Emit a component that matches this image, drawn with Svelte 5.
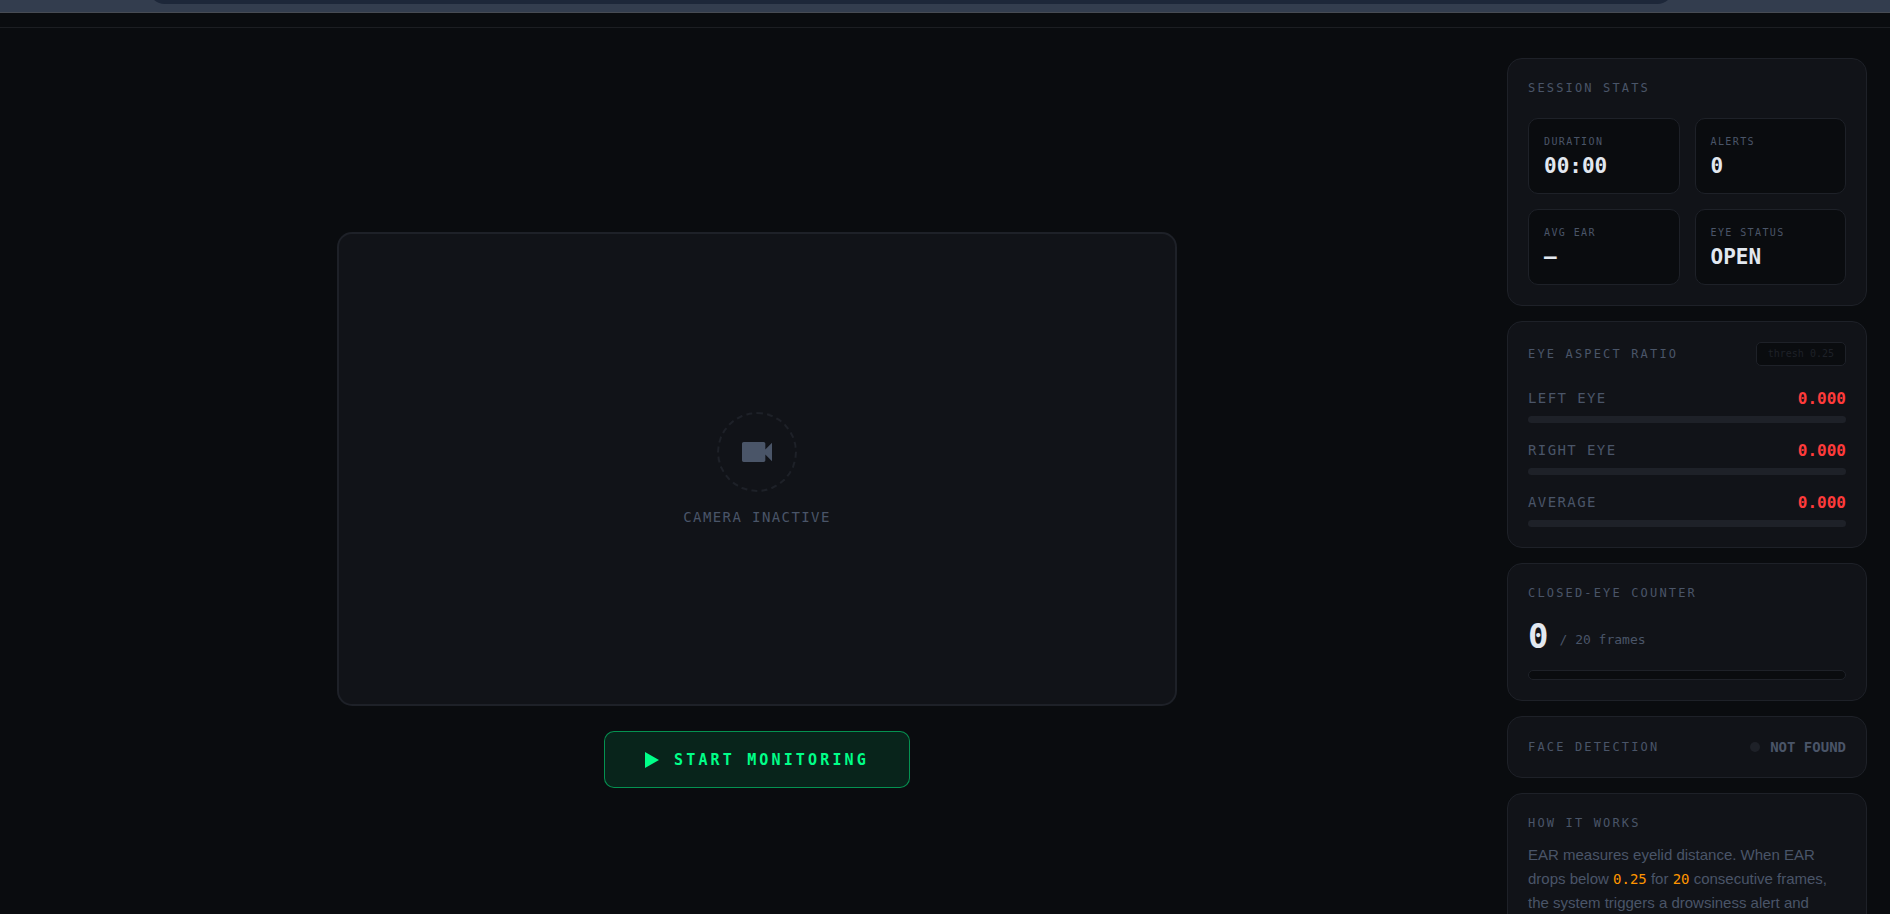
<script>
  const threshold = 0.25;
  const maxFrames = 20;

  let closedFrames = 0;
  let faceStatus = "NOT FOUND";

  let stats = [
    { label: "DURATION", value: "00:00" },
    { label: "ALERTS", value: "0" },
    { label: "AVG EAR", value: "—" },
    { label: "EYE STATUS", value: "OPEN" },
  ];

  let ratios = [
    { label: "LEFT EYE", value: 0 },
    { label: "RIGHT EYE", value: 0 },
    { label: "AVERAGE", value: 0 },
  ];
</script>

<div class="page">
  <div class="browser-bar">
    <div class="address"></div>
  </div>
  <header></header>

  <main>
    <section class="monitor">
      <div class="camera">
        <div class="camera-icon">
          <svg viewBox="0 0 24 24" width="40" height="40" aria-hidden="true">
            <path
              fill="currentColor"
              d="M17 10.5V7c0-.55-.45-1-1-1H4c-.55 0-1 .45-1 1v10c0 .55.45 1 1 1h12c.55 0 1-.45 1-1v-3.5l4 4v-11l-4 4z"
            />
          </svg>
        </div>
        <div class="camera-label">CAMERA INACTIVE</div>
      </div>

      <button class="start" type="button">
        <svg viewBox="0 0 14 16" width="14" height="16" aria-hidden="true">
          <path fill="currentColor" d="M0 0v16l14-8z" />
        </svg>
        START MONITORING
      </button>
    </section>

    <aside>
      <section class="card">
        <h2>SESSION STATS</h2>
        <div class="stats">
          {#each stats as stat}
            <div class="stat">
              <div class="stat-label">{stat.label}</div>
              <div class="stat-value">{stat.value}</div>
            </div>
          {/each}
        </div>
      </section>

      <section class="card">
        <div class="card-head">
          <h2>EYE ASPECT RATIO</h2>
          <span class="thresh">thresh {threshold}</span>
        </div>
        <div class="ratios">
          {#each ratios as ratio}
            <div class="ratio">
              <div class="ratio-row">
                <span class="ratio-label">{ratio.label}</span>
                <span class="ratio-value">{ratio.value.toFixed(3)}</span>
              </div>
              <div class="track">
                <div class="fill" style="width: {ratio.value * 200}%"></div>
              </div>
            </div>
          {/each}
        </div>
      </section>

      <section class="card counter">
        <h2>CLOSED-EYE COUNTER</h2>
        <div class="count">
          <span class="count-value">{closedFrames}</span>
          <span class="count-max">/ {maxFrames} frames</span>
        </div>
        <div class="count-track">
          <div class="fill" style="width: {(closedFrames / maxFrames) * 100}%"></div>
        </div>
      </section>

      <section class="card face">
        <h2>FACE DETECTION</h2>
        <div class="face-status">
          <span class="dot"></span>
          {faceStatus}
        </div>
      </section>

      <section class="card how">
        <h2>HOW IT WORKS</h2>
        <p>
          EAR measures eyelid distance. When EAR drops below
          <code>{threshold}</code> for <code>{maxFrames}</code> consecutive frames,
          the system triggers a drowsiness alert and
        </p>
      </section>
    </aside>
  </main>
</div>

<style>
  :global(body) {
    margin: 0;
    background: #0a0c0f;
  }

  .page {
    --bg: #0a0c0f;
    --card: #111318;
    --line: #1e2128;
    --muted: #4a5568;
    --text: #e2e8f0;
    --green: #00ff88;
    --red: #ff3b3b;
    --orange: #ff9500;
    height: 100vh;
    overflow: hidden;
    background: var(--bg);
    color: var(--text);
    font-family: "DejaVu Sans Mono", monospace;
  }
  .page * {
    box-sizing: border-box;
  }

  .browser-bar {
    height: 13px;
    padding: 0 216px 0 148px;
    overflow: hidden;
    background: #333d4e;
    border-bottom: 1px solid #474b53;
  }
  .address {
    height: 34px;
    margin-top: -30px;
    border-radius: 17px;
    background: #1d2739;
  }

  header {
    height: 15px;
    border-bottom: 1px solid #1c1e22;
  }

  main {
    display: grid;
    grid-template-columns: 1fr 360px;
    gap: 16px;
    padding: 30px 23px;
  }

  .monitor {
    display: flex;
    flex-direction: column;
    align-items: center;
    justify-content: center;
    gap: 25px;
  }

  .page .camera {
    box-sizing: content-box;
    width: calc(100% - 4px);
    max-width: 836px;
    aspect-ratio: 16 / 9;
    display: flex;
    flex-direction: column;
    align-items: center;
    justify-content: center;
    gap: 15px;
    background: var(--card);
    border: 2px solid var(--line);
    border-radius: 15px;
    color: var(--muted);
  }
  .camera-icon {
    width: 80px;
    height: 80px;
    display: flex;
    align-items: center;
    justify-content: center;
    border: 2px dashed var(--line);
    border-radius: 50%;
  }
  .camera-label {
    font-size: 14px;
    line-height: 20px;
    letter-spacing: 0.1em;
  }

  .start {
    height: 57px;
    display: flex;
    align-items: center;
    gap: 15px;
    padding: 0 40px;
    background: rgba(0, 255, 136, 0.1);
    border: 1px solid rgba(0, 255, 136, 0.5);
    border-radius: 10px;
    color: var(--green);
    font-family: inherit;
    font-size: 15px;
    font-weight: 700;
    letter-spacing: 0.21em;
    cursor: pointer;
  }

  aside {
    display: flex;
    flex-direction: column;
    gap: 15px;
  }

  .card {
    padding: 20px;
    background: var(--card);
    border: 1px solid var(--line);
    border-radius: 15px;
  }
  h2 {
    margin: 0 0 21px;
    color: var(--muted);
    font-size: 12px;
    font-weight: 400;
    line-height: 18px;
    letter-spacing: 0.18em;
  }

  .stats {
    display: grid;
    grid-template-columns: 1fr 1fr;
    gap: 15px;
  }
  .stat {
    height: 76px;
    padding: 15px;
    background: var(--bg);
    border: 1px solid var(--line);
    border-radius: 10px;
  }
  .stat-label {
    color: var(--muted);
    font-size: 10px;
    line-height: 16px;
    letter-spacing: 0.14em;
  }
  .stat-value {
    font-size: 21px;
    font-weight: 700;
    line-height: 33px;
  }

  .card-head {
    display: flex;
    align-items: center;
    justify-content: space-between;
    margin-bottom: 21px;
  }
  .card-head h2 {
    margin: 0;
  }
  .thresh {
    padding: 0 11px;
    background: var(--bg);
    border: 1px solid var(--line);
    border-radius: 5px;
    color: var(--line);
    font-size: 10px;
    line-height: 22px;
  }

  .ratios {
    display: flex;
    flex-direction: column;
    gap: 16px;
  }
  .ratio-row {
    display: flex;
    justify-content: space-between;
    margin-bottom: 6px;
    line-height: 23px;
  }
  .ratio-label {
    color: var(--muted);
    font-size: 14px;
    letter-spacing: 0.1em;
  }
  .ratio-value {
    color: var(--red);
    font-size: 16px;
    font-weight: 700;
  }
  .track {
    height: 7px;
    overflow: hidden;
    background: var(--line);
    border-radius: 4px;
  }
  .fill {
    height: 100%;
    background: var(--red);
  }

  .counter h2 {
    margin-bottom: 16px;
  }
  .count {
    display: flex;
    align-items: flex-end;
    gap: 11px;
    margin-bottom: 16px;
  }
  .count-value {
    font-size: 34px;
    font-weight: 700;
    line-height: 36px;
  }
  .count-max {
    color: var(--muted);
    font-size: 13px;
    line-height: 28px;
  }
  .count-track {
    height: 10px;
    overflow: hidden;
    background: var(--bg);
    border: 1px solid var(--line);
    border-radius: 5px;
  }

  .face {
    display: flex;
    align-items: center;
    justify-content: space-between;
  }
  .face h2 {
    margin: 0;
  }
  .face-status {
    display: flex;
    align-items: center;
    gap: 10px;
    color: var(--muted);
    font-size: 14px;
    font-weight: 700;
    line-height: 20px;
  }
  .dot {
    width: 10px;
    height: 10px;
    background: var(--line);
    border-radius: 50%;
  }

  .how h2 {
    margin-bottom: 11px;
  }
  .how p {
    min-height: 98px;
    margin: 0;
    color: var(--muted);
    font-family: "Liberation Sans", Arial, sans-serif;
    font-size: 15px;
    line-height: 24px;
  }
  .how code {
    color: var(--orange);
    font-family: "DejaVu Sans Mono", monospace;
    font-size: 14px;
    line-height: 1;
  }

  @media (max-width: 900px) {
    .page {
      height: auto;
    }
    main {
      grid-template-columns: 1fr;
    }
  }
</style>
